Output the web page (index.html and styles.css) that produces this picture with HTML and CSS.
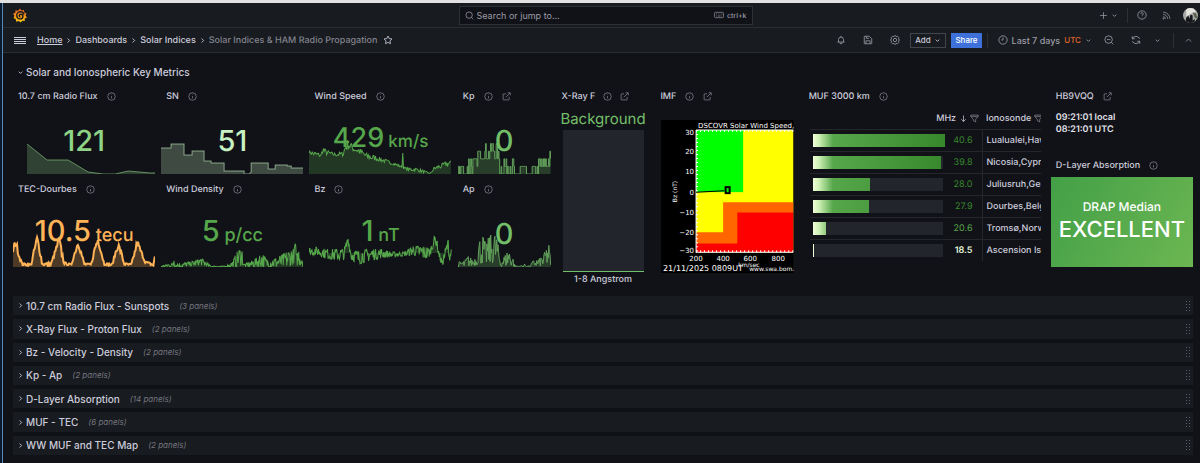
FILE: index.html
```html
<!DOCTYPE html>
<html lang="en">
<head>
    <meta charset="UTF-8">
    <meta name="viewport" content="width=device-width, initial-scale=1.0">
    <title>Solar Indices &amp; HAM Radio Propagation</title>
    <link rel="stylesheet" href="styles.css">
</head>
<body>
    <!-- Icon set -->
    <svg class="sprite" aria-hidden="true">
        <symbol id="i-info" viewBox="0 0 24 24"><circle cx="12" cy="12" r="10"/><path d="M12 11v6M12 7v1"/></symbol>
        <symbol id="i-link" viewBox="0 0 24 24"><path d="M11 5H4a1 1 0 0 0-1 1v14a1 1 0 0 0 1 1h14a1 1 0 0 0 1-1v-7M15 2h7v7M21 3 10 14"/></symbol>
        <symbol id="i-down" viewBox="0 0 24 24"><path d="m6 9 6 6 6-6"/></symbol>
        <symbol id="i-up" viewBox="0 0 24 24"><path d="m5 15 7-7 7 7"/></symbol>
        <symbol id="i-right" viewBox="0 0 24 24"><path d="m9 5 7 7-7 7"/></symbol>
        <symbol id="i-search" viewBox="0 0 24 24"><circle cx="11" cy="11" r="8.5"/><path d="m17 17 5 5"/></symbol>
        <symbol id="i-keyboard" viewBox="0 0 30 20"><rect x="1.500" y="2" width="27" height="16" rx="3"/><path d="M6 7h3M12 7h2M17 7h2M22 7h3M6 13h2M11 13h9M23 13h2"/></symbol>
        <symbol id="i-plus" viewBox="0 0 24 24"><path d="M12 3v18M3 12h18"/></symbol>
        <symbol id="i-help" viewBox="0 0 24 24"><circle cx="12" cy="12" r="10"/><path d="M9 9.500a3 3 0 1 1 4 2.800c-.7.300-1 .8-1 1.700M12 16.500v1"/></symbol>
        <symbol id="i-rss" viewBox="0 0 24 24"><path d="M3 3a18 18 0 0 1 18 18M3 9a12 12 0 0 1 12 12M3 15a6 6 0 0 1 6 6"/><circle cx="4" cy="20" r="1.500"/></symbol>
        <symbol id="i-star" viewBox="0 0 24 24"><path d="m12 2.500 2.900 6.100 6.600.9-4.800 4.700 1.200 6.700-5.900-3.200-5.900 3.200 1.200-6.700-4.800-4.700 6.600-.9z"/></symbol>
        <symbol id="i-bell" viewBox="0 0 24 24"><path d="M6 17v-6a6 6 0 0 1 12 0v6M3.500 17h17M12 5V2M9 18a3 3 0 0 0 6 0"/></symbol>
        <symbol id="i-save" viewBox="0 0 24 24"><path d="M4 3h11l6 6v11a1 1 0 0 1-1 1H4a1 1 0 0 1-1-1V4a1 1 0 0 1 1-1zM7 21v-7h10v7M8 3v5h6"/></symbol>
        <symbol id="i-gear" viewBox="0 0 24 24"><path d="m9 4 1-2h4l1 2 3-1 3 3-1 3 2 1v4l-2 1 1 3-3 3-3-1-1 2h-4l-1-2-3 1-3-3 1-3-2-1v-4l2-1-1-3 3-3z"/><circle cx="12" cy="12" r="4"/></symbol>
        <symbol id="i-clock" viewBox="0 0 24 24"><circle cx="12" cy="12" r="10"/><path d="M12 6v6H8"/></symbol>
        <symbol id="i-zoomout" viewBox="0 0 24 24"><circle cx="11" cy="11" r="9"/><path d="m17.500 17.500 5 5M7 11h8"/></symbol>
        <symbol id="i-refresh" viewBox="0 0 24 24"><path d="M3 9a10 10 0 0 1 18 0M21 15a10 10 0 0 1-18 0M3 3v6h6M21 21v-6h-6"/></symbol>
        <symbol id="i-arrow" viewBox="0 0 24 24"><path d="M12 4v16M6 14l6 6 6-6"/></symbol>
        <symbol id="i-filter" viewBox="0 0 24 24"><path d="M2 3h20v4l-7 7v7l-6-3v-4L2 7zM3 7h18"/></symbol>
    </svg>

    <div class="app">
        <header class="topbar">
            <a class="logo" href="#" aria-label="Grafana">
                <svg viewBox="0 0 28 28">
                    <defs>
                        <linearGradient id="flame" x1="0" y1="0" x2="0" y2="1">
                            <stop offset="0" stop-color="#f05a28"/>
                            <stop offset="1" stop-color="#fbca0a"/>
                        </linearGradient>
                    </defs>
                    <path fill="url(#flame)" d="M14 0l3 4 5-1 .5 5 4.500 2-2 4 3 4-4.500 2 0 5-5-.5-3 3.500-4-3-5 1.500-1-5L1 19l2-4.500L0 10.500 4.500 8.500 5 3.500l5 .8z"/>
                    <path fill="none" stroke="#181b1f" stroke-width="2.800" d="M22 12c-1-4-4.500-6-8-5.500-4 .5-7 4-6.500 8 .5 3.800 3.500 6.500 7 6.300 3-.2 5.300-2.300 5.300-5 0-2.500-2-4.300-4-4.300-2.200 0-3.300 1.500-3.200 3 .1 1 .8 2 2 2"/>
                </svg>
            </a>
            <div class="search">
                <label for="search" aria-label="Search"><svg class="icon"><use href="#i-search"/></svg></label>
                <input id="search" type="text" placeholder="Search or jump to...">
                <svg class="icon keyboard"><use href="#i-keyboard"/></svg>
                <kbd>ctrl+k</kbd>
            </div>
            <div class="topbar-actions">
                <button class="new-btn" aria-label="New"><svg class="icon"><use href="#i-plus"/></svg><svg class="icon small"><use href="#i-down"/></svg></button>
                <span class="divider"></span>
                <button class="top-btn" aria-label="Help"><svg class="icon large"><use href="#i-help"/></svg></button>
                <button class="top-btn" aria-label="News"><svg class="icon"><use href="#i-rss"/></svg></button>
                <button class="top-btn" aria-label="Profile">
                    <svg class="avatar" viewBox="0 0 14 14"><clipPath id="round"><circle cx="7" cy="7" r="7"/></clipPath><g clip-path="url(#round)"><path fill="#a9aaa5" d="M0 0h14v14H0z"/><path fill="#e4e4df" d="M3 0h7l2 4-4 1-5 3z"/><path fill="#15171a" d="M2 14 3 9l2-2 1 3 1-4 2 1v5l2-2v4z"/><path fill="#5d6352" d="M9 4l3 1 2 5-3-1z"/></g></svg>
                </button>
            </div>
        </header>

        <div class="toolbar">
            <button class="menu-btn" aria-label="Menu"><span></span><span></span><span></span><span></span></button>
            <nav class="breadcrumb">
                <a class="home" href="#">Home</a>
                <svg class="icon small"><use href="#i-right"/></svg>
                <a href="#">Dashboards</a>
                <svg class="icon small"><use href="#i-right"/></svg>
                <a href="#">Solar Indices</a>
                <svg class="icon small"><use href="#i-right"/></svg>
                <span class="current">Solar Indices &amp; HAM Radio Propagation</span>
                <button class="star" aria-label="Mark as favorite"><svg class="icon large"><use href="#i-star"/></svg></button>
            </nav>
            <div class="toolbar-actions">
                <button class="icon-btn" aria-label="Alerts"><svg class="icon large"><use href="#i-bell"/></svg></button>
                <button class="icon-btn" aria-label="Save"><svg class="icon large"><use href="#i-save"/></svg></button>
                <button class="icon-btn" aria-label="Settings"><svg class="icon large"><use href="#i-gear"/></svg></button>
                <button class="add-btn">Add <svg class="icon small"><use href="#i-down"/></svg></button>
                <button class="share-btn">Share</button>
                <span class="divider"></span>
                <button class="time-btn"><svg class="icon large"><use href="#i-clock"/></svg><span class="range">Last 7 days</span><span class="tz">UTC</span><svg class="icon small"><use href="#i-down"/></svg></button>
                <button class="icon-btn" aria-label="Zoom out"><svg class="icon large"><use href="#i-zoomout"/></svg></button>
                <button class="icon-btn" aria-label="Refresh"><svg class="icon large"><use href="#i-refresh"/></svg></button>
                <button class="caret-btn" aria-label="Refresh interval"><svg class="icon small"><use href="#i-down"/></svg></button>
                <span class="divider"></span>
                <button class="collapse-btn" aria-label="Collapse"><svg class="icon"><use href="#i-up"/></svg></button>
            </div>
        </div>

        <main>
            <button class="row-title open"><svg class="icon small"><use href="#i-down"/></svg>Solar and Ionospheric Key Metrics</button>

            <div class="dashboard">
                <div class="stats">
                    <section class="panel wide">
                        <h2>10.7 cm Radio Flux <svg class="icon"><use href="#i-info"/></svg></h2>
                        <div class="stat light"><svg class="spark" data-chart="flux"></svg><p>121</p></div>
                    </section>
                    <section class="panel wide">
                        <h2>SN <svg class="icon"><use href="#i-info"/></svg></h2>
                        <div class="stat pale"><svg class="spark" data-chart="sn"></svg><p>51</p></div>
                    </section>
                    <section class="panel wide">
                        <h2>Wind Speed <svg class="icon"><use href="#i-info"/></svg></h2>
                        <div class="stat green compact"><svg class="spark" data-chart="speed"></svg><p>429 <small>km/s</small></p></div>
                    </section>
                    <section class="panel">
                        <h2>Kp <svg class="icon"><use href="#i-info"/></svg><a href="#" aria-label="Kp details"><svg class="icon"><use href="#i-link"/></svg></a></h2>
                        <div class="stat soft"><svg class="spark" data-chart="kp"></svg><p>0</p></div>
                    </section>
                    <section class="panel wide">
                        <h2>TEC-Dourbes <svg class="icon"><use href="#i-info"/></svg></h2>
                        <div class="stat orange"><svg class="spark" data-chart="tec"></svg><p>10.5 <small>tecu</small></p></div>
                    </section>
                    <section class="panel wide">
                        <h2>Wind Density <svg class="icon"><use href="#i-info"/></svg></h2>
                        <div class="stat green"><svg class="spark" data-chart="density"></svg><p>5 <small>p/cc</small></p></div>
                    </section>
                    <section class="panel wide">
                        <h2>Bz <svg class="icon"><use href="#i-info"/></svg></h2>
                        <div class="stat green"><svg class="spark" data-chart="bz"></svg><p>1 <small>nT</small></p></div>
                    </section>
                    <section class="panel">
                        <h2>Ap <svg class="icon"><use href="#i-info"/></svg></h2>
                        <div class="stat soft"><svg class="spark" data-chart="ap"></svg><p>0</p></div>
                    </section>
                </div>

                <section class="panel xray">
                    <h2>X-Ray F <svg class="icon"><use href="#i-info"/></svg><a href="#" aria-label="X-Ray details"><svg class="icon"><use href="#i-link"/></svg></a></h2>
                    <p class="xray-value">Background</p>
                    <div class="xray-bar"></div>
                    <p class="xray-label">1-8 Angstrom</p>
                </section>

                <section class="panel imf">
                    <h2>IMF <svg class="icon"><use href="#i-info"/></svg><a href="#" aria-label="IMF details"><svg class="icon"><use href="#i-link"/></svg></a></h2>
                    <svg class="imf-plot" viewBox="0 0 132 153">
                        <rect width="132" height="153" fill="#000"/>
                        <rect x="35" y="10" width="97" height="122" fill="#ff0"/>
                        <rect x="35" y="10" width="47" height="62" fill="#0f0"/>
                        <path fill="#f60" d="M132 82H62v30H35v11h41V92h56z"/>
                        <path fill="#f00" d="M132 92H76v31H35v9h97z"/>
                        <path class="axis" d="M35 10v122h97M35 10h97"/>
                        <path class="ticks" d="M36 10v122M35 131h97M35 11h97"/>
                        <path d="M35 72l28-1.500" stroke="#000" fill="none"/>
                        <rect x="64.500" y="67" width="4" height="6" fill="none" stroke="#000" stroke-width="2"/>
                        <text x="37" y="8">DSCOVR Solar Wind Speed,</text>
                        <g class="tick-y">
                            <text x="33" y="15">30</text>
                            <text x="33" y="34">20</text>
                            <text x="33" y="54">10</text>
                            <text x="33" y="75">0</text>
                            <text x="33" y="95">−10</text>
                            <text x="33" y="115">−20</text>
                            <text x="33" y="133">−30</text>
                        </g>
                        <g class="tick-x">
                            <text x="35" y="141">200</text>
                            <text x="62" y="141">400</text>
                            <text x="89" y="141">600</text>
                            <text x="117" y="141">800</text>
                        </g>
                        <text class="unit" transform="translate(16 82) rotate(-90)">Bz (nT)</text>
                        <text class="unit" x="77" y="147">km/sec</text>
                        <text class="stamp" x="2" y="151">21/11/2025 0809UT</text>
                        <text class="unit" x="88" y="151">www.swa.bom.</text>
                    </svg>
                </section>

                <section class="panel muf">
                    <h2>MUF 3000 km <svg class="icon"><use href="#i-info"/></svg></h2>
                    <table>
                        <thead>
                            <tr>
                                <th class="mhz">MHz <svg class="icon"><use href="#i-arrow"/></svg> <svg class="icon"><use href="#i-filter"/></svg></th>
                                <th>Ionosonde <svg class="icon"><use href="#i-filter"/></svg></th>
                            </tr>
                        </thead>
                        <tbody>
                            <tr><td><div class="gauge"><div class="track"><span style="width: 101%"></span></div><b>40.6</b></div></td><td>Lualualei,Hawaii</td></tr>
                            <tr><td><div class="gauge"><div class="track"><span style="width: 98%"></span></div><b>39.8</b></div></td><td>Nicosia,Cyprus</td></tr>
                            <tr><td><div class="gauge"><div class="track"><span style="width: 44%"></span></div><b>28.0</b></div></td><td>Juliusruh,Germany</td></tr>
                            <tr><td><div class="gauge"><div class="track"><span style="width: 43%"></span></div><b>27.9</b></div></td><td>Dourbes,Belgium</td></tr>
                            <tr><td><div class="gauge"><div class="track"><span style="width: 10%"></span></div><b class="mid">20.6</b></div></td><td>Tromsø,Norway</td></tr>
                            <tr><td><div class="gauge"><div class="track"><span style="width: 1%"></span></div><b class="low">18.5</b></div></td><td>Ascension Island</td></tr>
                        </tbody>
                    </table>
                </section>

                <div class="side">
                    <section class="panel clock">
                        <h2>HB9VQQ <a href="#" aria-label="HB9VQQ"><svg class="icon"><use href="#i-link"/></svg></a></h2>
                        <p>09:21:01 local<br>08:21:01 UTC</p>
                    </section>
                    <section class="panel drap">
                        <h2>D-Layer Absorption <svg class="icon"><use href="#i-info"/></svg></h2>
                        <div class="drap-box"><p>DRAP Median</p><strong>EXCELLENT</strong></div>
                    </section>
                </div>
            </div>

            <div class="rows">
                <div class="row"><button class="row-title"><svg class="icon small"><use href="#i-right"/></svg>10.7 cm Radio Flux - Sunspots <em>(3 panels)</em></button><span class="handle"></span></div>
                <div class="row"><button class="row-title"><svg class="icon small"><use href="#i-right"/></svg>X-Ray Flux - Proton Flux <em>(2 panels)</em></button><span class="handle"></span></div>
                <div class="row"><button class="row-title"><svg class="icon small"><use href="#i-right"/></svg>Bz - Velocity - Density <em>(2 panels)</em></button><span class="handle"></span></div>
                <div class="row"><button class="row-title"><svg class="icon small"><use href="#i-right"/></svg>Kp - Ap <em>(2 panels)</em></button><span class="handle"></span></div>
                <div class="row"><button class="row-title"><svg class="icon small"><use href="#i-right"/></svg>D-Layer Absorption <em>(14 panels)</em></button><span class="handle"></span></div>
                <div class="row"><button class="row-title"><svg class="icon small"><use href="#i-right"/></svg>MUF - TEC <em>(6 panels)</em></button><span class="handle"></span></div>
                <div class="row"><button class="row-title"><svg class="icon small"><use href="#i-right"/></svg>WW MUF and TEC Map <em>(2 panels)</em></button><span class="handle"></span></div>
            </div>
        </main>
    </div>

    <script src="charts.js"></script>
</body>
</html>
```

FILE: styles.css
```css
* {
    box-sizing: border-box;
}
body {
    margin: 0;
    background-color: #0c1a30;
    border-top: 3px solid #e2e2e2;
    color: #ccccdc;
    font-family: Inter, sans-serif;
    font-size: 9px;
    font-weight: 500;
    text-rendering: geometricPrecision;
}
h2, p {
    margin: 0;
}
a {
    color: inherit;
    text-decoration: none;
}
button {
    display: flex;
    align-items: center;
    justify-content: center;
    padding: 0;
    border: none;
    background: none;
    color: inherit;
    font: inherit;
    cursor: pointer;
}
.sprite {
    display: none;
}
.icon {
    width: 9px;
    height: 9px;
    flex: none;
    fill: none;
    stroke: currentColor;
    stroke-width: 2;
}
.icon.large {
    width: 10px;
    height: 10px;
}
.icon.small {
    width: 7px;
    height: 7px;
    stroke-width: 3;
}
.app {
    display: flex;
    flex-direction: column;
    min-height: calc(100vh - 3px);
    margin-left: 2px;
    border-left: 1px solid #5a88b4;
    background-color: #111217;
}

/* Top bar */
.topbar, .toolbar {
    display: flex;
    align-items: center;
    height: 25px;
    border-bottom: 1px solid #2a2d32;
    background-color: #181b1f;
    color: #9a9ba6;
}
.topbar {
    display: grid;
    grid-template-columns: 1fr 294px 1fr;
}
.logo {
    padding-left: 10px;
}
.logo svg {
    display: block;
    width: 14px;
    height: 15px;
}
.search {
    display: flex;
    align-items: center;
    gap: 3px;
    height: 19px;
    margin-left: 4px;
    margin-right: -4px;
    padding: 0 5px;
    border: 1px solid #2e3036;
    background-color: #111217;
}
.search label {
    display: flex;
}
.search input {
    flex: 1;
    min-width: 0;
    padding: 0;
    border: none;
    outline: none;
    background: none;
    color: inherit;
    font: 400 9px Inter, sans-serif;
}
.search input::placeholder {
    color: #9a9ba6;
}
.search kbd {
    font: 500 7px Inter, sans-serif;
}
.icon.keyboard {
    width: 10px;
    height: 8px;
}
.topbar-actions, .toolbar-actions {
    display: flex;
    align-items: center;
    justify-content: flex-end;
    margin-left: auto;
}
.new-btn {
    gap: 3px;
    margin-right: 9px;
}
.top-btn {
    width: 24px;
}
.topbar .divider {
    margin-right: 2px;
}
.topbar-actions {
    margin-right: -2px;
}
.avatar {
    width: 15px;
    height: 15px;
}
.divider {
    width: 1px;
    height: 15px;
    background-color: #2e3036;
}

/* Toolbar */
.menu-btn {
    flex-direction: column;
    gap: 1px;
    width: 12px;
    margin: 0 11px;
}
.menu-btn span {
    width: 12px;
    height: 1px;
    background-color: #ccccdc;
}
.breadcrumb {
    display: flex;
    align-items: center;
    gap: 3px;
    color: #ccccdc;
}
.home {
    text-decoration: underline;
}
.breadcrumb .current {
    color: #82838e;
}
.star {
    margin-left: 3px;
}
.icon-btn {
    width: 27px;
}
.add-btn, .share-btn {
    height: 15px;
    font-size: 8px;
}
.add-btn {
    gap: 3px;
    width: 36px;
    margin: 0 5px 0 2px;
    border: 1px solid #43454c;
    color: #ccccdc;
}
.share-btn {
    width: 31px;
    margin-right: 5px;
    background-color: #3d71d9;
    color: #fff;
}
.time-btn {
    justify-content: flex-end;
    gap: 4px;
    width: 107px;
    padding-right: 3px;
}
.tz {
    color: #e0662a;
    font-size: 8px;
}
.caret-btn {
    width: 16px;
    margin-right: 8px;
}
.collapse-btn {
    width: 24px;
    margin-left: 2px;
}

/* Dashboard grid */
main {
    display: flex;
    flex: 1;
    flex-direction: column;
    gap: 5px;
    padding: 10px 7px 8px 10px;
}
.row-title {
    gap: 2px;
    padding-left: 4px;
    font-size: 10px;
}
.row-title.open {
    align-self: flex-start;
    height: 18px;
}
.dashboard {
    display: grid;
    grid-template-columns: repeat(24, 1fr);
    gap: 6px;
}
.stats {
    display: grid;
    grid-column: span 11;
    grid-template-columns: repeat(11, 1fr);
    grid-auto-rows: 88px;
    gap: 5px 6px;
}
.panel {
    display: flex;
    flex-direction: column;
    grid-column: span 2;
    min-width: 0;
}
.panel.wide, .panel.imf, .side {
    grid-column: span 3;
}
.panel.muf {
    grid-column: span 5;
}
.panel h2 {
    display: flex;
    align-items: center;
    gap: 9px;
    height: 22px;
    flex: none;
    padding: 0 0 1px 5px;
    font-size: 9px;
    font-weight: 500;
    white-space: nowrap;
}
.panel h2 a {
    display: flex;
}
.panel h2 .icon {
    color: #84858f;
}

/* Stat panels */
.stat {
    position: relative;
    display: flex;
    flex: 1;
    align-items: center;
    justify-content: center;
    padding-bottom: 2px;
}
.stat p {
    position: relative;
    font-size: 29px;
    line-height: 29px;
    white-space: nowrap;
}
.stat small {
    margin-left: -3px;
    font-size: 18px;
}
.stat.compact p {
    font-size: 27px;
}
.stat.compact small {
    font-size: 17px;
}
.spark {
    position: absolute;
    left: 0;
    bottom: 0;
    width: 100%;
    height: 34px;
}
.spark .line {
    fill: none;
    stroke: currentColor;
    vector-effect: non-scaling-stroke;
}
.spark .area {
    fill: currentColor;
    opacity: 0.25;
}
.light {
    color: #8fd486;
}
.pale {
    color: #c8f2c2;
}
.green {
    color: #56a64b;
}
.soft {
    color: #73bf69;
}
.orange {
    color: #ffb357;
}
.light .line, .pale .line {
    opacity: 0.6;
}
.soft .line {
    opacity: 0.8;
}
.orange .line {
    stroke-width: 2;
}

/* X-Ray and IMF */
.xray {
    padding-bottom: 4px;
    text-align: center;
}
.panel.xray h2 {
    gap: 8px;
}
.xray-value {
    color: #73bf69;
    font-size: 15px;
    font-weight: 400;
    line-height: 22px;
}
.xray-bar {
    flex: 1;
    min-height: 142px;
    margin: 0 5px 0 6px;
    border-bottom: 1px solid #73bf69;
    background-color: #22252b;
}
.xray-label {
    line-height: 15px;
}
.imf-plot {
    width: calc(100% - 10px);
    margin: 12px 4px 0 6px;
    fill: #fff;
    font-family: "DejaVu Sans", sans-serif;
    font-size: 7px;
    font-weight: 400;
}
.axis {
    fill: none;
    stroke: #fff;
}
.ticks {
    fill: none;
    stroke: #fff;
    stroke-width: 2;
    stroke-dasharray: 1 3;
}
.tick-y {
    text-anchor: end;
}
.tick-x {
    text-anchor: middle;
}
.unit {
    font-size: 6px;
}
.stamp {
    font-size: 8px;
}

/* MUF table */
table {
    width: calc(100% - 10px);
    margin-left: 6px;
    table-layout: fixed;
    border-collapse: collapse;
    text-align: left;
}
th, td {
    height: 22px;
    padding: 0 4px 0 3px;
    border-bottom: 1px solid #24262c;
    overflow: hidden;
    white-space: nowrap;
}
th {
    height: 21px;
    font-weight: 500;
}
td:first-child {
    border-right: 1px solid #24262c;
}
td:last-child {
    padding-right: 0;
}
th .icon {
    vertical-align: -2px;
}
th .icon:last-child {
    color: #84858f;
}
.mhz {
    width: 75%;
    text-align: right;
}
tr:last-child td {
    border-bottom: none;
}
.gauge {
    display: flex;
    align-items: center;
}
.track {
    flex: 1;
    height: 13px;
    background-color: #22252b;
}
.track span {
    display: block;
    height: 100%;
    background: linear-gradient(90deg, #f2ffd9, #cdf0b4 6px, #56a64b 20px, #37872d 131px);
}
.gauge b {
    width: 35px;
    padding-right: 6px;
    color: #37872d;
    font-weight: 400;
    text-align: right;
}
.gauge .mid {
    color: #56a64b;
}
.gauge .low {
    color: #e2f5d9;
    font-weight: 600;
}

/* Clock and D-layer */
.side {
    display: flex;
    flex-direction: column;
    gap: 5px;
}
.clock {
    height: 64px;
}
.clock p {
    padding: 4px 0 0 5px;
    color: #e0e0ea;
    font-weight: 600;
    line-height: 12px;
}
.drap {
    height: 112px;
}
.drap-box {
    display: flex;
    flex: 1;
    flex-direction: column;
    align-items: center;
    justify-content: center;
    gap: 3px;
    padding-bottom: 2px;
    background: linear-gradient(120deg, #43a047, #6cb652);
    color: #fff;
    font-size: 12px;
}
.drap-box strong {
    font-size: 22px;
    font-weight: 500;
    line-height: 27px;
}

/* Collapsed rows */
.rows {
    display: flex;
    flex: 1;
    flex-direction: column;
    gap: 4px;
}
.row {
    display: flex;
    flex: 1;
    align-items: center;
    justify-content: space-between;
    background-color: #181b1f;
}
.row em {
    margin-left: 8px;
    color: #74757f;
    font-size: 8px;
    font-weight: 400;
}
.handle {
    width: 6px;
    height: 12px;
    margin-right: 2px;
    background-image: radial-gradient(circle, #5c5e66 1px, transparent 1px);
    background-size: 3px 3px;
}
```

FILE: charts.js
```js
// Each point is [x, height]. "noise" charts use [x, low, high] envelopes.
const charts = {
    flux: { width: 142, points: [[14, 30], [34, 14], [55, 14], [75, 2], [90, 0], [102, 0], [115, 3], [137, 1], [142, 1]] },
    sn: { width: 142, points: [[0, 26], [10, 26], [10, 30], [23, 30], [23, 19], [31, 19], [31, 23], [43, 23], [43, 13], [50, 13], [50, 11], [63, 11], [63, 3], [83, 3], [83, 0], [88, 0], [90, 2], [90, 11], [107, 11], [107, 5], [114, 5], [114, 9], [126, 9], [126, 8], [130, 8], [130, 6], [142, 6]] },
    speed: { width: 142, step: 0.8, noise: [[0, 21, 23], [7, 17, 22], [12, 17, 20], [14, 22, 27], [17, 19, 24], [25, 18, 21], [34, 18, 22], [37, 23, 34], [40, 25, 34], [44, 23, 28], [50, 20, 26], [57, 15, 21], [70, 13, 17], [88, 8, 10], [93, 6, 8], [93.2, 20, 22], [93.8, 20, 22], [94, 5, 7], [100, 3, 6], [107, 3, 6], [114, 1, 4], [118, 1, 2], [121, 0, 1], [125, 4, 7], [132, 6, 10], [138, 8, 13], [142, 9, 13]] },
    kp: { width: 92, step: 0.7, levels: 7.6, noise: [[0, 0, 10], [5, 0, 10], [6, 0, 0], [8, 0, 0], [9, 0, 17], [18, 0, 17], [20, 11, 26], [23, 14, 26], [25, 14, 32], [28, 11, 26], [31, 13, 32], [37, 12, 32], [40, 11, 25], [41, 0, 17], [55, 0, 18], [56, 0, 0], [60, 0, 0], [61, 0, 10], [67, 0, 10], [68, 0, 0], [72, 0, 0], [73, 0, 10], [79, 0, 11], [82, 0, 17], [87, 3, 18], [89, 6, 25], [92, 0, 17]] },
    tec: { width: 142, step: 0.8, noise: [[0, 13, 20], [2, 21, 26], [3, 21, 27], [6, 9, 15], [9, 2, 4], [18, 1, 3], [21, 12, 18], [24, 25, 31], [27, 12, 20], [29, 2, 4], [38, 1, 4], [43, 16, 20], [46, 24, 30], [49, 8, 16], [51, 3, 5], [58, 1, 3], [62, 13, 17], [65, 22, 27], [69, 8, 13], [71, 2, 4], [78, 1, 3], [82, 17, 22], [85, 24, 31], [88, 13, 18], [91, 2, 4], [99, 1, 3], [102, 11, 15], [105, 19, 25], [108, 12, 16], [111, 2, 4], [118, 1, 3], [122, 14, 18], [124, 22, 28], [127, 15, 19], [132, 4, 6], [140, 1, 3], [142, 10, 13]] },
    density: { width: 142, step: 0.5, noise: [[0, 0, 1], [10, 0, 4], [12, 0, 4], [13, 0, 18], [14, 0, 4], [22, 0, 4], [27, 1, 5], [33, 1, 6], [40, 2, 9], [44, 1, 6], [50, 0, 1], [65, 0, 1], [72, 0, 6], [75, 0, 14], [78, 2, 18], [81, 2, 18], [83, 0, 3], [90, 0, 6], [96, 0, 10], [101, 0, 14], [105, 0, 8], [115, 0, 9], [122, 0, 13], [130, 1, 18], [133, 4, 18], [134, 12, 32], [135, 1, 12], [138, 2, 20], [142, 0, 13]] },
    bz: { width: 142, step: 0.5, base: 14, noise: [[0, 12, 19], [8, 12, 20], [16, 9, 18], [25, 7, 18], [35, 7, 18], [39, 23, 32], [42, 7, 17], [50, 3, 16], [60, 6, 18], [72, 9, 18], [82, 10, 15], [95, 11, 15], [104, 12, 21], [112, 9, 21], [118, 8, 20], [121, 11, 18], [124, 20, 31], [127, 22, 32], [130, 9, 15], [133, 0, 7], [136, 9, 19], [139, 18, 28], [140, 5, 15], [142, 11, 19]] },
    ap: { width: 92, step: 0.6, noise: [[0, 0, 5], [6, 0, 6], [10, 1, 11], [14, 1, 8], [19, 2, 11], [20, 3, 25], [25, 4, 31], [27, 3, 24], [32, 4, 32], [38, 4, 32], [40, 6, 20], [42, 0, 7], [47, 1, 12], [50, 2, 18], [54, 1, 12], [56, 0, 2], [61, 0, 1], [66, 0, 3], [71, 0, 1], [74, 1, 6], [80, 1, 8], [84, 1, 11], [88, 3, 19], [90, 4, 22], [92, 1, 7]] }
};

const height = 34;
let seed = 7;

function random() {
    seed = (seed * 16807) % 2147483647;
    return seed / 2147483647;
}

// pushes values towards both ends of the envelope, so spikes stay visible
function spiky() {
    const r = random();
    return (1 - Math.cos(r * Math.PI)) / 2;
}

function expand(chart) {
    if (chart.points) return chart.points;
    const points = [];
    let i = 0;
    for (let x = 0; x <= chart.width; x += chart.step) {
        while (i < chart.noise.length - 2 && chart.noise[i + 1][0] <= x) i++;
        const a = chart.noise[i];
        const b = chart.noise[i + 1];
        const t = (x - a[0]) / (b[0] - a[0]);
        const low = a[1] + (b[1] - a[1]) * t;
        const high = a[2] + (b[2] - a[2]) * t;
        let y = low + (high - low) * spiky();
        if (chart.levels) {
            y = Math.round(y / chart.levels) * chart.levels;
            if (points.length) points.push([x, points[points.length - 1][1]]);
        }
        points.push([x, y]);
    }
    return points;
}

document.querySelectorAll(".spark").forEach(svg => {
    const chart = charts[svg.dataset.chart];
    const points = expand(chart);
    const base = height - (chart.base || 0);
    const line = points.map(p => `${p[0].toFixed(1)} ${(height - p[1]).toFixed(1)}`).join("L");
    const first = points[0][0];
    const last = points[points.length - 1][0];
    svg.setAttribute("viewBox", `0 0 ${chart.width} ${height}`);
    svg.setAttribute("preserveAspectRatio", "none");
    svg.innerHTML = `
        <path class="area" d="M${first} ${base}L${line}L${last} ${base}z"/>
        <path class="line" d="M${line}"/>
    `;
});
```
